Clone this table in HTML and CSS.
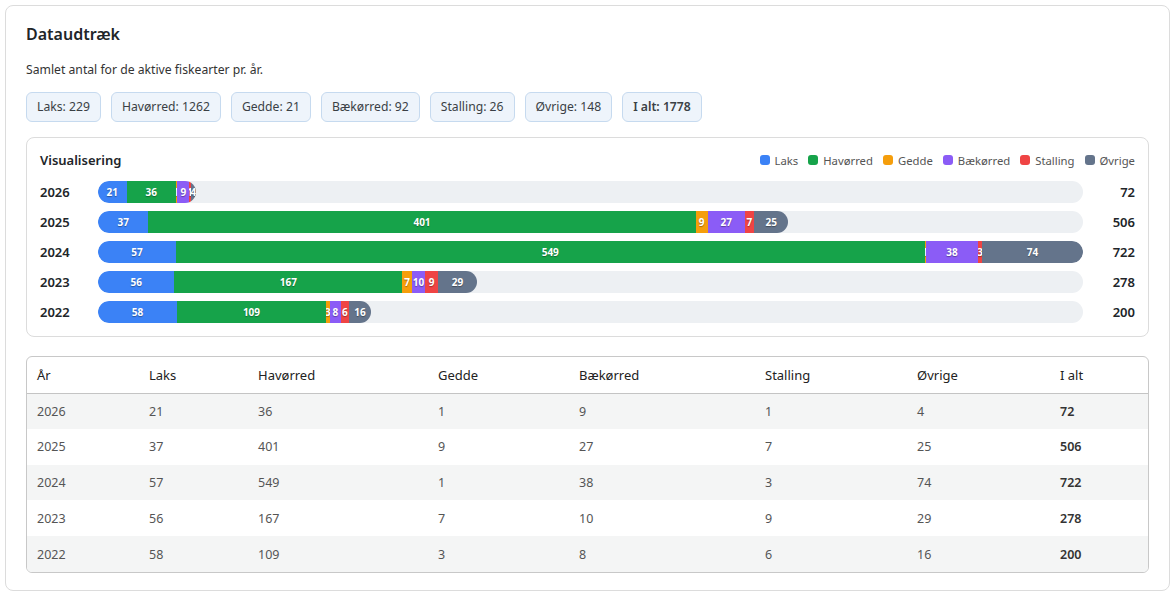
FILE: index.html
```html
<!DOCTYPE html>
<html lang="da">
<head>
<meta charset="utf-8">
<title>Dataudtræk</title>
<link rel="stylesheet" href="styles.css">
</head>
<body>
<section class="card">
  <h2 class="title">Dataudtræk</h2>
  <p class="subtitle">Samlet antal for de aktive fiskearter pr. år.</p>
  <div class="badges">
    <span class="badge">Laks: 229</span>
    <span class="badge">Havørred: 1262</span>
    <span class="badge">Gedde: 21</span>
    <span class="badge">Bækørred: 92</span>
    <span class="badge">Stalling: 26</span>
    <span class="badge">Øvrige: 148</span>
    <span class="badge badge-total">I alt: 1778</span>
  </div>

  <div class="chart">
    <div class="chart-head">
      <div class="chart-title">Visualisering</div>
      <div class="legend">
        <span class="legend-item"><i class="sw c-laks"></i>Laks</span>
        <span class="legend-item"><i class="sw c-hav"></i>Havørred</span>
        <span class="legend-item"><i class="sw c-ged"></i>Gedde</span>
        <span class="legend-item"><i class="sw c-baek"></i>Bækørred</span>
        <span class="legend-item"><i class="sw c-stal"></i>Stalling</span>
        <span class="legend-item"><i class="sw c-ovr"></i>Øvrige</span>
      </div>
    </div>
    <div class="rows">
      <div class="row">
        <div class="year">2026</div>
        <div class="track"><div class="fill" style="width:9.972%">
          <span class="seg c-laks" style="flex-grow:21">21</span>
          <span class="seg c-hav" style="flex-grow:36">36</span>
          <span class="seg c-ged" style="flex-grow:1">1</span>
          <span class="seg c-baek" style="flex-grow:9">9</span>
          <span class="seg c-stal" style="flex-grow:1">1</span>
          <span class="seg c-ovr" style="flex-grow:4">4</span>
        </div></div>
        <div class="total">72</div>
      </div>
      <div class="row">
        <div class="year">2025</div>
        <div class="track"><div class="fill" style="width:70.083%">
          <span class="seg c-laks" style="flex-grow:37">37</span>
          <span class="seg c-hav" style="flex-grow:401">401</span>
          <span class="seg c-ged" style="flex-grow:9">9</span>
          <span class="seg c-baek" style="flex-grow:27">27</span>
          <span class="seg c-stal" style="flex-grow:7">7</span>
          <span class="seg c-ovr" style="flex-grow:25">25</span>
        </div></div>
        <div class="total">506</div>
      </div>
      <div class="row">
        <div class="year">2024</div>
        <div class="track"><div class="fill" style="width:100%">
          <span class="seg c-laks" style="flex-grow:57">57</span>
          <span class="seg c-hav" style="flex-grow:549">549</span>
          <span class="seg c-ged" style="flex-grow:1">1</span>
          <span class="seg c-baek" style="flex-grow:38">38</span>
          <span class="seg c-stal" style="flex-grow:3">3</span>
          <span class="seg c-ovr" style="flex-grow:74">74</span>
        </div></div>
        <div class="total">722</div>
      </div>
      <div class="row">
        <div class="year">2023</div>
        <div class="track"><div class="fill" style="width:38.504%">
          <span class="seg c-laks" style="flex-grow:56">56</span>
          <span class="seg c-hav" style="flex-grow:167">167</span>
          <span class="seg c-ged" style="flex-grow:7">7</span>
          <span class="seg c-baek" style="flex-grow:10">10</span>
          <span class="seg c-stal" style="flex-grow:9">9</span>
          <span class="seg c-ovr" style="flex-grow:29">29</span>
        </div></div>
        <div class="total">278</div>
      </div>
      <div class="row">
        <div class="year">2022</div>
        <div class="track"><div class="fill" style="width:27.701%">
          <span class="seg c-laks" style="flex-grow:58">58</span>
          <span class="seg c-hav" style="flex-grow:109">109</span>
          <span class="seg c-ged" style="flex-grow:3">3</span>
          <span class="seg c-baek" style="flex-grow:8">8</span>
          <span class="seg c-stal" style="flex-grow:6">6</span>
          <span class="seg c-ovr" style="flex-grow:16">16</span>
        </div></div>
        <div class="total">200</div>
      </div>
    </div>
  </div>

  <div class="table-wrap">
    <table class="data">
      <colgroup>
        <col class="w-year"><col class="w-laks"><col class="w-hav"><col class="w-ged">
        <col class="w-baek"><col class="w-stal"><col class="w-ovr"><col class="w-tot">
      </colgroup>
      <thead>
        <tr><th>År</th><th>Laks</th><th>Havørred</th><th>Gedde</th><th>Bækørred</th><th>Stalling</th><th>Øvrige</th><th>I alt</th></tr>
      </thead>
      <tbody>
        <tr><td>2026</td><td>21</td><td>36</td><td>1</td><td>9</td><td>1</td><td>4</td><td class="strong">72</td></tr>
        <tr><td>2025</td><td>37</td><td>401</td><td>9</td><td>27</td><td>7</td><td>25</td><td class="strong">506</td></tr>
        <tr><td>2024</td><td>57</td><td>549</td><td>1</td><td>38</td><td>3</td><td>74</td><td class="strong">722</td></tr>
        <tr><td>2023</td><td>56</td><td>167</td><td>7</td><td>10</td><td>9</td><td>29</td><td class="strong">278</td></tr>
        <tr><td>2022</td><td>58</td><td>109</td><td>3</td><td>8</td><td>6</td><td>16</td><td class="strong">200</td></tr>
      </tbody>
    </table>
  </div>
</section>
</body>
</html>
```
FILE: styles.css
```css
* { box-sizing: border-box; }
html, body { margin: 0; padding: 0; background: #fff; }
body {
  padding: 5px 6px 7px 5px;
  font-family: "Noto Sans", "Open Sans", "DejaVu Sans", sans-serif;
  color: #222;
  font-size: 13px;
}
.card {
  border: 1px solid #dcdcdc;
  border-radius: 8px;
  padding: 18px 20px 17px 20px;
  background: #fff;
}
.title {
  margin: 0;
  font-size: 16px;
  line-height: 20px;
  font-weight: 600;
  color: #212529;
}
.subtitle {
  margin: 17px 0 0 0;
  font-size: 12.2px;
  line-height: 18px;
  color: #333;
}
.badges {
  display: flex;
  flex-wrap: wrap;
  gap: 10px;
  margin-top: 13px;
}
.badge {
  display: inline-block;
  padding: 5px 10px;
  line-height: 18px;
  font-size: 12.2px;
  color: #3a3f45;
  background: #eef4fb;
  border: 1px solid #c6daef;
  border-radius: 6px;
}
.badge-total { font-weight: 600; }

.chart {
  margin-top: 15px;
  border: 1px solid #dcdcdc;
  border-radius: 8px;
  padding: 12px 13px 13px 13px;
}
.chart-head {
  display: flex;
  justify-content: space-between;
  align-items: center;
  height: 20px;
}
.chart-title {
  font-weight: 600;
  font-size: 13px;
  color: #212529;
}
.legend {
  display: flex;
  gap: 10px;
  font-size: 11.3px;
  color: #555;
}
.legend-item { display: inline-flex; align-items: center; gap: 5px; }
.sw {
  display: inline-block;
  width: 10px;
  height: 10px;
  border-radius: 3px;
}
.rows {
  margin-top: 11px;
  display: flex;
  flex-direction: column;
  gap: 8px;
}
.row {
  display: flex;
  align-items: center;
  height: 22px;
}
.year {
  width: 58px;
  font-weight: 600;
  font-size: 13px;
  color: #212529;
}
.track {
  flex: 1;
  height: 22px;
  background: #edf0f3;
  border-radius: 11px;
  overflow: hidden;
}
.fill {
  display: flex;
  height: 100%;
  border-radius: 11px;
  overflow: hidden;
}
.seg {
  flex-basis: 0;
  min-width: 0;
  display: flex;
  align-items: center;
  justify-content: center;
  overflow: hidden;
  white-space: nowrap;
  color: #fff;
  font-size: 10px;
  font-weight: 700;
  text-shadow: 0 1px 1px rgba(0,0,0,0.35);
}
.total {
  width: 52px;
  text-align: right;
  font-weight: 600;
  font-size: 13px;
  color: #212529;
}
.c-laks { background: #3b82f6; }
.c-hav { background: #16a34a; }
.c-ged { background: #f59e0b; }
.c-baek { background: #8b5cf6; }
.c-stal { background: #ef4444; }
.c-ovr { background: #64748b; }

.table-wrap {
  margin-top: 19px;
  border: 1px solid #c8c8c8;
  border-radius: 6px;
  overflow: hidden;
}
.data {
  width: 100%;
  border-collapse: collapse;
  table-layout: fixed;
}
.w-year { width: 112px; }
.w-laks { width: 109px; }
.w-hav { width: 180px; }
.w-ged { width: 141px; }
.w-baek { width: 186px; }
.w-stal { width: 152px; }
.w-ovr { width: 143px; }
.w-tot { width: auto; }
.data th {
  text-align: left;
  font-weight: 400;
  font-size: 13px;
  color: #222;
  padding: 0 10px;
  height: 36px;
  border-bottom: 1px solid #c4c4c4;
}
.data td {
  padding: 0 10px;
  height: 35.8px;
  font-size: 12.5px;
  color: #555;
}
.data tbody tr:nth-child(odd) td { background: #f4f5f5; }
.data td.strong { font-weight: 600; color: #333; }
```
